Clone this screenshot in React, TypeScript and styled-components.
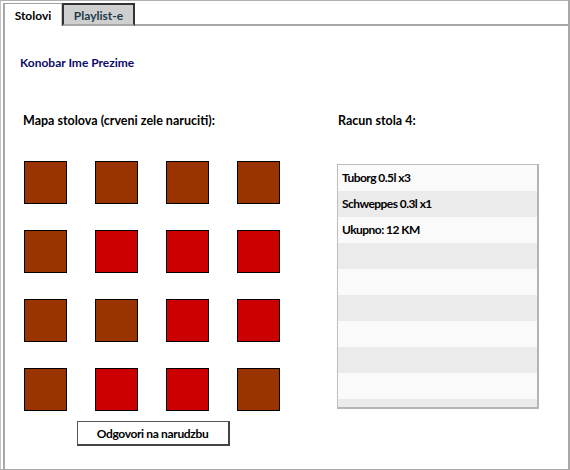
import React from "react";
import styled, { createGlobalStyle } from "styled-components";

const Global = createGlobalStyle`
  html, body { margin: 0; padding: 0; background: #ffffff; }
  body { font-family: Lato, "Open Sans", sans-serif; }
`;

const Frame = styled.div`
  box-sizing: border-box;
  width: 570px;
  height: 470px;
  border-top: 1px solid #b0b0b0;
  border-left: 1px solid #c4c4c4;
  border-right: 2px solid #a8a8a8;
  border-bottom: 1px solid #a8a8a8;
  padding: 2px 0 0 2px;
  display: flex;
  flex-direction: column;
  background: #fff;
`;

const TabRow = styled.div`
  display: flex;
  height: 23px;
  flex-shrink: 0;
`;

const Tab = styled.div<{ $active?: boolean }>`
  box-sizing: border-box;
  height: 23px;
  display: flex;
  align-items: center;
  justify-content: center;
  font-size: 12px;
  font-weight: 700;
  padding-top: 1px;
  ${(p) =>
    p.$active
      ? `
    width: 59px;
    background: #ffffff;
    color: #000000;
    border-top: 1px solid #a0a0a0;
    border-left: 2px solid #a8a8a8;
    border-right: 1px solid #c8c8c8;
  `
      : `
    width: 73px;
    background: #cfcfcf;
    color: #1c3a4a;
    border-top: 2px solid #333333;
    border-left: 2px solid #333333;
    border-right: 2px solid #333333;
    border-bottom: 2px solid #a8a8a8;
  `}
`;

const TabFiller = styled.div`
  flex: 1;
  border-bottom: 2px solid #a8a8a8;
`;

const Panel = styled.div`
  flex: 1;
  border-left: 2px solid #a8a8a8;
  padding: 29px 0 0 15px;
  display: flex;
  flex-direction: column;
`;

const Waiter = styled.div`
  color: #0c0c6a;
  font-size: 12px;
  font-weight: 700;
  line-height: 15px;
`;

const Columns = styled.div`
  display: flex;
  margin-top: 43px;
`;

const MapColumn = styled.div`
  width: 258px;
  margin-left: 3px;
  display: flex;
  flex-direction: column;
`;

const BillColumn = styled.div`
  margin-left: 57px;
  display: flex;
  flex-direction: column;
`;

const Heading = styled.div`
  color: #000;
  font-size: 12.5px;
  font-weight: 700;
  line-height: 16px;
`;

const TableGrid = styled.div`
  display: grid;
  grid-template-columns: repeat(4, 43px);
  grid-auto-rows: 43px;
  column-gap: 28px;
  row-gap: 26px;
  margin-top: 32px;
  margin-left: 1px;
`;

const Table = styled.div<{ $wants: boolean }>`
  box-sizing: border-box;
  border: 1.5px solid #000;
  background: ${(p) => (p.$wants ? "#cc0000" : "#993300")};
`;

const ReplyButton = styled.button`
  box-sizing: border-box;
  align-self: center;
  margin-top: 10px;
  margin-left: 2px;
  width: 153px;
  height: 25px;
  background: #fff;
  border: 1px solid #555;
  border-right: 2px solid #444;
  border-bottom: 2px solid #444;
  font-family: Lato, "Open Sans", sans-serif;
  font-size: 12px;
  font-weight: 700;
  letter-spacing: -0.35px;
  color: #000;
  padding: 0;
`;

const BillBox = styled.div`
  box-sizing: border-box;
  margin-top: 35px;
  margin-left: -1px;
  width: 202px;
  height: 245px;
  border: 1px solid #bdbdbd;
  border-right: 2px solid #b5b5b5;
  border-bottom: 2px solid #b5b5b5;
  overflow: hidden;
  display: flex;
  flex-direction: column;
`;

const BillRow = styled.div<{ $odd: boolean }>`
  flex-shrink: 0;
  height: 26px;
  line-height: 25px;
  padding-left: 4px;
  font-size: 12px;
  font-weight: 700;
  letter-spacing: -0.55px;
  color: #000;
  background: ${(p) => (p.$odd ? "#ebebeb" : "#fafafa")};
`;

const tables: boolean[] = [
  false, false, false, false,
  false, true, true, true,
  false, false, true, true,
  false, true, true, false,
];

const billLines = [
  "Tuborg 0.5l x3",
  "Schweppes 0.3l x1",
  "Ukupno: 12 KM",
  "", "", "", "", "", "", "",
];

export default function App() {
  return (
    <>
      <Global />
      <Frame>
        <TabRow>
          <Tab $active>Stolovi</Tab>
          <Tab>Playlist-e</Tab>
          <TabFiller />
        </TabRow>
        <Panel>
          <Waiter>Konobar Ime Prezime</Waiter>
          <Columns>
            <MapColumn>
              <Heading>Mapa stolova (crveni zele naruciti):</Heading>
              <TableGrid>
                {tables.map((w, i) => (
                  <Table key={i} $wants={w} />
                ))}
              </TableGrid>
              <ReplyButton>Odgovori na narudzbu</ReplyButton>
            </MapColumn>
            <BillColumn>
              <Heading>Racun stola 4:</Heading>
              <BillBox>
                {billLines.map((t, i) => (
                  <BillRow key={i} $odd={i % 2 === 1}>
                    {t}
                  </BillRow>
                ))}
              </BillBox>
            </BillColumn>
          </Columns>
        </Panel>
      </Frame>
    </>
  );
}
